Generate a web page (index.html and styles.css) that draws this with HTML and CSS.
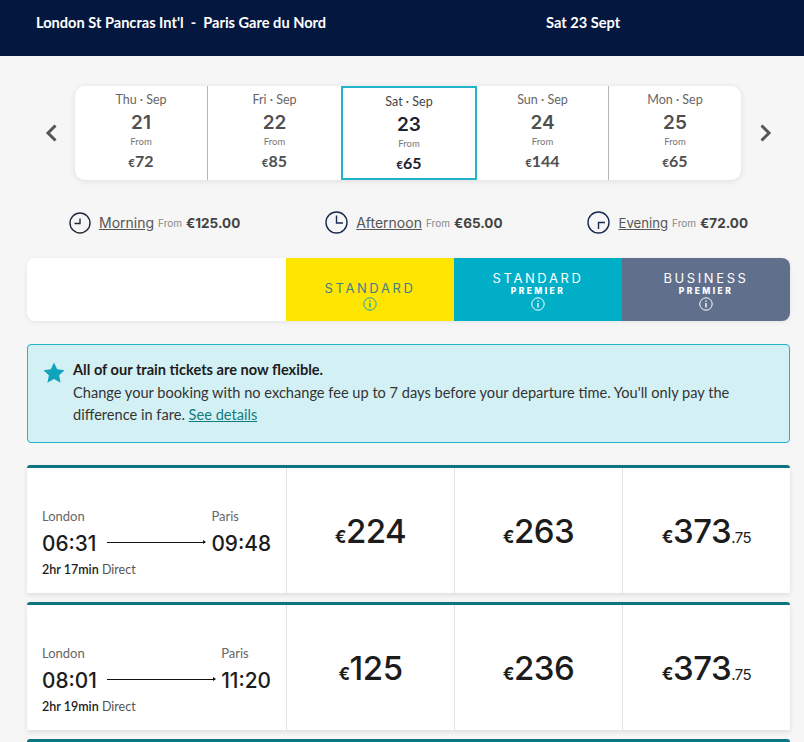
FILE: index.html
```html
<!DOCTYPE html>
<html lang="en">
<head>
    <meta charset="UTF-8">
    <title>Choose your train</title>
    <link rel="stylesheet" href="styles.css">
</head>
<body>
    <div class="topbar">
        <div class="route">London St Pancras Int'l&nbsp; -&nbsp; Paris Gare du Nord</div>
        <div class="travel-date">Sat 23 Sept</div>
    </div>

    <div class="date-row">
        <svg class="chevron" width="14" height="18" viewBox="0 0 14 18"><path d="M11.5 1.5 L4 9 L11.5 16.5" fill="none" stroke="#555" stroke-width="3"/></svg>
        <div class="date-card">
            <div class="day">
                <div class="day-name">Thu · Sep</div>
                <div class="day-num">21</div>
                <div class="day-from">From</div>
                <div class="day-price"><small>€</small>72</div>
            </div>
            <div class="day">
                <div class="day-name">Fri · Sep</div>
                <div class="day-num">22</div>
                <div class="day-from">From</div>
                <div class="day-price"><small>€</small>85</div>
            </div>
            <div class="day selected">
                <div class="day-name">Sat · Sep</div>
                <div class="day-num">23</div>
                <div class="day-from">From</div>
                <div class="day-price"><small>€</small>65</div>
            </div>
            <div class="day no-line">
                <div class="day-name">Sun · Sep</div>
                <div class="day-num">24</div>
                <div class="day-from">From</div>
                <div class="day-price"><small>€</small>144</div>
            </div>
            <div class="day">
                <div class="day-name">Mon · Sep</div>
                <div class="day-num">25</div>
                <div class="day-from">From</div>
                <div class="day-price"><small>€</small>65</div>
            </div>
        </div>
        <svg class="chevron" width="14" height="18" viewBox="0 0 14 18"><path d="M3.5 1.5 L11 9 L3.5 16.5" fill="none" stroke="#555" stroke-width="3"/></svg>
    </div>

    <div class="periods">
        <div class="period">
            <svg width="22" height="22" viewBox="0 0 22 22"><circle cx="11" cy="11" r="10" fill="none" stroke="#222b3a" stroke-width="1.4"/><path d="M5.5 11.5 H11 V6.5" fill="none" stroke="#222b3a" stroke-width="1.4"/></svg>
            <a class="period-name">Morning</a> <span class="period-from">From</span> <b>€125.00</b>
        </div>
        <div class="period">
            <svg width="23" height="23" viewBox="0 0 23 23"><circle cx="11.5" cy="11.5" r="10.5" fill="none" stroke="#1a2a4e" stroke-width="1.4"/><path d="M11.5 4.5 V12 H18" fill="none" stroke="#1a2a4e" stroke-width="1.4"/></svg>
            <a class="period-name">Afternoon</a> <span class="period-from">From</span> <b>€65.00</b>
        </div>
        <div class="period">
            <svg width="23" height="23" viewBox="0 0 23 23"><circle cx="11.5" cy="11.5" r="10.5" fill="none" stroke="#1a2a4e" stroke-width="1.4"/><path d="M11.5 18 V11.5 H18" fill="none" stroke="#1a2a4e" stroke-width="1.4"/></svg>
            <a class="period-name evening">Evening</a> <span class="period-from">From</span> <b>€72.00</b>
        </div>
    </div>

    <div class="main">
        <div class="fare-head">
            <div class="fare-blank"></div>
            <div class="fare fare-standard">
                <div class="fare-name">STANDARD</div>
                <svg class="info" width="14" height="14" viewBox="0 0 14 14"><circle cx="7" cy="7" r="6.2" fill="none" stroke="currentColor"/><path d="M7 6 V10.5 M7 3.4 V4.8" stroke="currentColor" stroke-width="1.4"/></svg>
            </div>
            <div class="fare fare-premier">
                <div class="fare-name">STANDARD</div>
                <div class="fare-sub">PREMIER</div>
                <svg class="info" width="14" height="14" viewBox="0 0 14 14"><circle cx="7" cy="7" r="6.2" fill="none" stroke="currentColor"/><path d="M7 6 V10.5 M7 3.4 V4.8" stroke="currentColor" stroke-width="1.4"/></svg>
            </div>
            <div class="fare fare-business">
                <div class="fare-name">BUSINESS</div>
                <div class="fare-sub">PREMIER</div>
                <svg class="info" width="14" height="14" viewBox="0 0 14 14"><circle cx="7" cy="7" r="6.2" fill="none" stroke="currentColor"/><path d="M7 6 V10.5 M7 3.4 V4.8" stroke="currentColor" stroke-width="1.4"/></svg>
            </div>
        </div>

        <div class="notice">
            <svg class="star" width="22" height="22" viewBox="0 0 22 22"><path d="M11 0.5 L14.2 7.3 L21.6 8.2 L16.1 13.3 L17.6 20.7 L11 17 L4.4 20.7 L5.9 13.3 L0.4 8.2 L7.8 7.3 Z" fill="#11a3bb"/></svg>
            <div class="notice-text">
                <div class="notice-title">All of our train tickets are now flexible.</div>
                <p>Change your booking with no exchange fee up to 7 days before your departure time. You'll only pay the difference in fare. <a>See details</a></p>
            </div>
        </div>

        <div class="journey">
            <div class="journey-info">
                <span class="from-city">London</span>
                <span class="to-city">Paris</span>
                <span class="time">06:31</span>
                <span class="arrow"></span>
                <span class="time">09:48</span>
                <div class="duration"><b>2hr 17min</b> Direct</div>
            </div>
            <div class="price"><small>€</small>224</div>
            <div class="price"><small>€</small>263</div>
            <div class="price"><small>€</small>373<em>.75</em></div>
        </div>

        <div class="journey">
            <div class="journey-info">
                <span class="from-city">London</span>
                <span class="to-city">Paris</span>
                <span class="time">08:01</span>
                <span class="arrow"></span>
                <span class="time">11:20</span>
                <div class="duration"><b>2hr 19min</b> Direct</div>
            </div>
            <div class="price"><small>€</small>125</div>
            <div class="price"><small>€</small>236</div>
            <div class="price"><small>€</small>373<em>.75</em></div>
        </div>

        <div class="journey"></div>
    </div>
</body>
</html>
```

FILE: styles.css
```css
* {
    margin: 0;
    padding: 0;
    box-sizing: border-box;
}

body {
    font-family: 'Lato', 'Open Sans', sans-serif;
    background: #f6f6f6;
    color: #1c1c1c;
}

.topbar {
    height: 56px;
    background: #04183f;
    color: white;
    display: flex;
    padding: 14px 0 0 36px;
    font-size: 14.6px;
    font-weight: 700;
    line-height: 18px;
}

.route {
    width: 510px;
}

.date-row {
    display: flex;
    align-items: center;
    justify-content: space-between;
    margin-top: 30px;
    padding: 0 32px 0 44px;
}

.date-card {
    display: flex;
    width: 666px;
    height: 94px;
    background: white;
    border-radius: 10px;
    box-shadow: 0 1px 6px rgba(0,0,0,0.1);
}

.day {
    width: 133px;
    text-align: center;
    border-left: 1px solid #b5b5b5;
    padding-top: 6px;
    color: #4f4f4f;
}

.day:first-child {
    width: 132px;
    border-left: none;
}

.day:nth-child(2) {
    width: 134px;
}

.day.no-line {
    width: 131px;
    border-left: none;
}

.day.selected {
    width: 136px;
    height: 94px;
    border: 2px solid #22b4c8;
    color: #1d2230;
}

.day-name {
    font-size: 12.5px;
    line-height: 16px;
    color: #666;
}

.selected .day-name {
    color: #444;
}

.day-num {
    font-family: 'Inter', sans-serif;
    font-size: 19px;
    font-weight: 600;
    line-height: 24px;
    margin-top: 3px;
}

.day-from {
    font-size: 9.5px;
    line-height: 12px;
    margin-top: 1px;
    color: #777;
}

.day-price {
    font-size: 16px;
    font-weight: 700;
    line-height: 26px;
}

.day-price small {
    font-size: 11px;
}

.periods {
    display: flex;
    justify-content: space-between;
    margin-top: 31px;
    padding: 0 56px 0 69px;
    height: 23px;
    font-family: 'Inter', sans-serif;
}

.period {
    display: flex;
    align-items: center;
    gap: 4px;
    font-size: 14px;
    color: #555;
}

.period svg {
    margin-right: 4px;
}

.period-name {
    text-decoration: underline;
}

.period-name.evening {
    font-size: 13.2px;
}

.period-from {
    font-size: 10px;
    color: #888;
}

.period b {
    font-size: 13.5px;
    color: #444;
    font-weight: 700;
}

.main {
    margin: 0 14px 0 27px;
}

.fare-head {
    display: flex;
    margin-top: 24px;
    height: 63px;
    background: white;
    border-radius: 8px;
    overflow: hidden;
    box-shadow: 0 1px 4px rgba(0,0,0,0.08);
}

.fare-blank {
    width: 259px;
}

.fare {
    width: 168px;
    display: flex;
    flex-direction: column;
    align-items: center;
    justify-content: flex-end;
    padding-bottom: 10px;
    color: white;
}

.fare-standard {
    background: #ffe600;
    color: #1a9fb0;
}

.fare-premier {
    background: #00aec7;
}

.fare-business {
    background: #5f6f8c;
}

.fare-name {
    font-family: 'Inter', sans-serif;
    font-size: 13px;
    letter-spacing: 2.6px;
    line-height: 14px;
}

.fare-standard .fare-name {
    color: #3f7f8c;
    margin-bottom: 2px;
}

.fare-sub {
    font-family: 'Inter', sans-serif;
    font-size: 8.5px;
    font-weight: 800;
    letter-spacing: 2.4px;
    line-height: 12px;
}

.notice {
    display: flex;
    gap: 8px;
    margin-top: 23px;
    height: 99px;
    padding: 15px;
    background: #d3f1f5;
    border: 1px solid #20b2c6;
    border-radius: 4px;
}

.star {
    flex: none;
    margin-top: 2px;
}

.notice-title {
    font-size: 14.6px;
    font-weight: 700;
    line-height: 20px;
    margin-bottom: 2px;
}

.notice p {
    font-size: 14.6px;
    line-height: 22px;
    color: #333;
}

.notice a {
    color: #147a80;
    text-decoration: underline;
}

.journey {
    display: flex;
    height: 128px;
    margin-top: 9px;
    background: white;
    border-top: 3px solid #0b7680;
    border-radius: 3px 3px 0 0;
    box-shadow: 0 2px 5px rgba(0,0,0,0.1);
}

.notice + .journey {
    margin-top: 22px;
}

.journey:last-child {
    height: 3px;
    box-shadow: none;
}

.journey-info {
    width: 259px;
    padding: 40px 15px 0;
    display: grid;
    grid-template-columns: auto 1fr auto;
    align-content: start;
}

.from-city, .to-city {
    font-size: 13px;
    line-height: 16px;
    color: #666;
}

.from-city {
    grid-column: 1 / 3;
}

.time {
    font-family: 'Inter', sans-serif;
    font-size: 20.8px;
    font-weight: 500;
    line-height: 28px;
    margin-top: 6px;
}

.arrow {
    align-self: center;
    height: 1px;
    margin: 3px 6px 0 10px;
    background: #111;
    position: relative;
}

.arrow::after {
    content: "";
    position: absolute;
    right: -1px;
    top: -2px;
    border-left: 3px solid #111;
    border-top: 2.5px solid transparent;
    border-bottom: 2.5px solid transparent;
}

.duration {
    grid-column: 1 / 4;
    font-size: 12.5px;
    line-height: 18px;
    margin-top: 3px;
    color: #555;
}

.duration b {
    color: #1c1c1c;
    font-weight: 600;
}

.price {
    width: 168px;
    border-left: 1px solid #e2e2e2;
    display: flex;
    align-items: baseline;
    justify-content: center;
    padding-top: 43px;
    font-family: 'Inter', sans-serif;
    font-size: 33px;
    font-weight: 500;
    letter-spacing: -0.5px;
    line-height: 40px;
}

.price small {
    font-size: 17px;
    font-weight: 700;
}

.price em {
    font-size: 15px;
    font-style: normal;
    font-weight: 400;
}
```
